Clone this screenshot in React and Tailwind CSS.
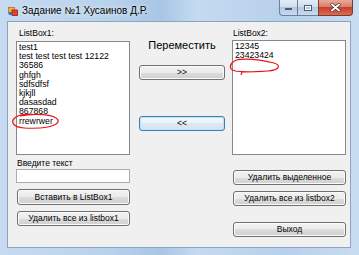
import React from "react";

const font = "font-['Liberation_Sans',Arial,sans-serif]";

function Btn({ children, className = "", active = false }) {
  return (
    <div
      className={`flex items-center justify-center rounded-[3px] border text-[8.5px] leading-none text-black ${
        active
          ? "border-[#3c7fb1] shadow-[inset_0_0_0_1px_#bfe3f8] bg-[linear-gradient(to_bottom,#f4f8fb_0%,#eaf1f7_50%,#dde9f3_50%,#d4e3f0_100%)]"
          : "border-[#707070] shadow-[inset_0_0_0_1px_#fbfbfb] bg-[linear-gradient(to_bottom,#f2f2f2_0%,#ebebeb_50%,#dddddd_50%,#cfcfcf_100%)]"
      } ${className}`}
    >
      {children}
    </div>
  );
}

function ListBox({ items, className = "" }) {
  return (
    <div className={`border border-[#828790] bg-white pl-[2px] pt-[1px] ${className}`}>
      {items.map((it, i) => (
        <div key={i} className="text-[8.7px] leading-[9.2px] text-black whitespace-nowrap">
          {it}
        </div>
      ))}
    </div>
  );
}

function FormIcon() {
  return (
    <svg width="10" height="10" viewBox="0 0 10 10">
      <rect x="0.5" y="1.5" width="6" height="6" fill="#f0b040" stroke="#c07010" strokeWidth="0.8" />
      <rect x="4" y="4" width="5.5" height="5.5" fill="#e04030" stroke="#a02010" strokeWidth="0.8" />
      <rect x="1" y="6" width="3" height="3" fill="#3070d0" />
    </svg>
  );
}

export default function App() {
  const list1 = [
    "test1",
    "test test test test 12122",
    "36586",
    "ghfgh",
    "sdfsdfsf",
    "kjkjll",
    "dasasdad",
    "867868",
    "rrewrwer",
  ];
  const list2 = ["12345", "23423424"];

  return (
    <div
      className={`relative w-[359px] h-[255px] flex flex-col overflow-hidden ${font} bg-[linear-gradient(to_right,#c6dbf1_0%,#b9d2ec_30%,#a9c6e6_45%,#c4daf0_55%,#b7d0eb_80%,#c9ddf2_100%)]`}
    >
      {/* title bar */}
      <div className="h-[21px] flex items-start">
        <div className="pl-[8px] pt-[6px]">
          <FormIcon />
        </div>
        <div className="pl-[4px] pt-[5px] text-[10px] leading-[12px] text-black [text-shadow:0_0_4px_#ffffff]">
          Задание №1 Хусаинов Д.Р.
        </div>
        <div className="ml-auto mr-[6px] flex h-[16px]">
          <div className="w-[19px] h-full rounded-bl-[4px] border border-[#6d7f9a] border-t-0 bg-[linear-gradient(to_bottom,#e3ecf6_0%,#ccdbec_50%,#b4c8e0_50%,#c8dbef_100%)] flex items-center justify-center">
            <div className="w-[7px] h-[2px] bg-white border border-[#4b5b72] mt-[3px]" />
          </div>
          <div className="w-[20px] h-full border-y border-[#6d7f9a] border-t-0 bg-[linear-gradient(to_bottom,#e3ecf6_0%,#ccdbec_50%,#b4c8e0_50%,#c8dbef_100%)] flex items-center justify-center">
            <div className="w-[8px] h-[6px] border border-[#4b5b72] shadow-[inset_0_0_0_1px_#ffffff]" />
          </div>
          <div className="w-[35px] h-full rounded-br-[4px] border border-[#7a3a30] border-t-0 bg-[linear-gradient(to_bottom,#e9a99b_0%,#d97a66_50%,#c7402c_50%,#dd6a50_100%)] flex items-center justify-center">
            <svg width="11" height="9" viewBox="0 0 11 9">
              <path d="M2 1.5 L9 7.5 M9 1.5 L2 7.5" stroke="#3a2a2a" strokeWidth="3.2" strokeLinecap="round" />
              <path d="M2 1.5 L9 7.5 M9 1.5 L2 7.5" stroke="#ffffff" strokeWidth="2" strokeLinecap="round" />
            </svg>
          </div>
        </div>
      </div>

      {/* client area */}
      <div className="pl-[7px] pr-[8px] pb-[7px] flex-1 flex">
        <div className="flex-1 border border-[#8ea3bf] bg-[#f0f0f0] flex pl-[8px]">
          {/* left column */}
          <div className="w-[114px] flex flex-col">
            <div className="mt-[6px] h-[10px] pl-[3px] text-[8.5px] leading-[10px] text-black">ListBox1:</div>
            <ListBox items={list1} className="mt-[3px] h-[114px]" />
            <div className="mt-[3px] h-[10px] pl-[1px] text-[8.5px] leading-[10px] text-black">Введите текст</div>
            <div className="mt-[1px] h-[14px] border border-[#abadb3] bg-white" />
            <Btn className="mt-[6px] h-[16px] ml-[1px]">Вставить в ListBox1</Btn>
            <Btn className="mt-[6px] h-[15px] ml-[1px]">Удалить все из listbox1</Btn>
          </div>

          {/* middle column */}
          <div className="ml-[9px] w-[86px] flex flex-col">
            <div className="mt-[17px] h-[13px] text-center text-[11px] leading-[13px] text-black">Переместить</div>
            <Btn className="mt-[13px] h-[15px]">&gt;&gt;</Btn>
            <Btn active className="mt-[36px] h-[15px]">&lt;&lt;</Btn>
          </div>

          {/* right column */}
          <div className="ml-[7px] w-[114px] flex flex-col">
            <div className="mt-[6px] h-[10px] pl-[1px] text-[8.5px] leading-[10px] text-black">ListBox2:</div>
            <ListBox items={list2} className="mt-[2px] h-[115px]" />
            <Btn className="mt-[15px] h-[15px] ml-[1px]">Удалить выделенное</Btn>
            <Btn className="mt-[6px] h-[15px] ml-[1px]">Удалить все из listbox2</Btn>
            <Btn className="mt-[16px] h-[15px] ml-[1px]">Выход</Btn>
          </div>
        </div>
      </div>

      {/* red marker annotations */}
      <svg
        className="absolute inset-0 pointer-events-none"
        width="359"
        height="255"
        viewBox="0 0 359 255"
      >
        <path
          d="M20 116 C 34 113, 55 114, 58 120 C 60 127, 40 129, 24 128 C 12 127, 10 121, 16 117 C 19 115, 24 114, 30 114"
          fill="none"
          stroke="#e8141c"
          strokeWidth="1.2"
        />
        <path
          d="M240 59 C 232 61, 229 65, 231 69 C 234 73, 252 72, 268 71 C 280 70, 281 65, 274 63 C 262 60, 248 58, 236 60 M 242 72 L 241 75"
          fill="none"
          stroke="#e8141c"
          strokeWidth="1.2"
        />
      </svg>
    </div>
  );
}
